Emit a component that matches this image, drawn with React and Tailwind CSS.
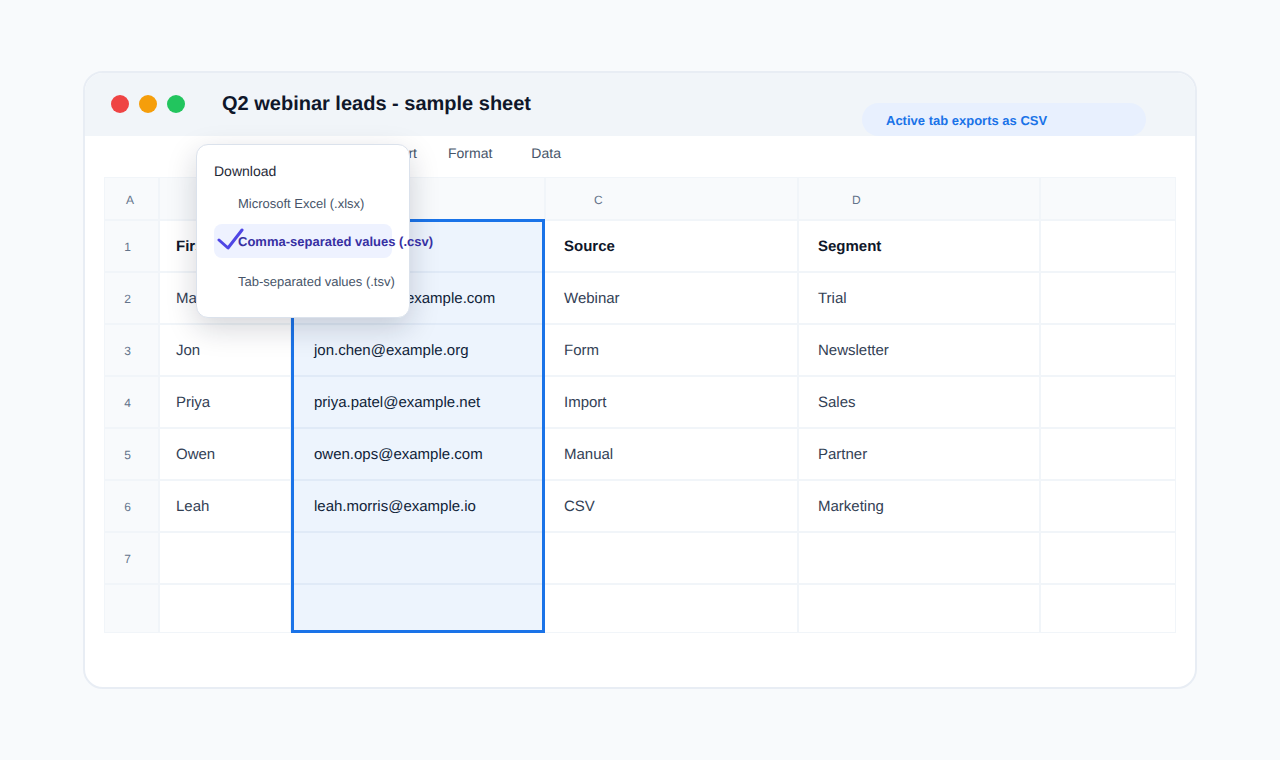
import React from "react";

const rows = [
  ["1", "First name", "Email", "Source", "Segment"],
  ["2", "Maya", "maya.lopez@example.com", "Webinar", "Trial"],
  ["3", "Jon", "jon.chen@example.org", "Form", "Newsletter"],
  ["4", "Priya", "priya.patel@example.net", "Import", "Sales"],
  ["5", "Owen", "owen.ops@example.com", "Manual", "Partner"],
  ["6", "Leah", "leah.morris@example.io", "CSV", "Marketing"],
  ["7", "", "", "", ""],
  ["", "", "", "", ""],
];

function HeadCell({ children, className = "" }) {
  return (
    <div className={`flex h-[43px] items-center border-b-2 border-[#f1f5f9] bg-[#f8fafc] pt-[2px] text-xs text-[#64748b] ${className}`}>
      {children}
    </div>
  );
}

function Row({ cells, last }) {
  const bold = cells[0] === "1";
  const rowStyle = last ? "h-[48px] border-b" : "h-[52px] border-b-2";
  const text = bold ? "font-bold text-[#0f172a]" : "text-[#334155]";
  return (
    <>
      <div className={`${rowStyle} flex items-center justify-center border-r-2 border-[#f1f5f9] bg-[#f8fafc] pt-[2px] pr-2 text-xs text-[#64748b]`}>
        {cells[0]}
      </div>
      <div className={`${rowStyle} ${text} flex items-center border-r-2 border-[#f1f5f9] pt-[2px] pl-4 text-[15px]`}>{cells[1]}</div>
      <div className={`${rowStyle} ${bold ? text : "text-[#0f172a]"} flex items-center border-[#f1f5f9] pt-[2px] pl-[22px] text-[15px]`}>{cells[2]}</div>
      <div className={`${rowStyle} ${text} flex items-center border-r-2 border-[#f1f5f9] pt-[2px] pl-[18px] text-[15px]`}>{cells[3]}</div>
      <div className={`${rowStyle} ${text} flex items-center border-r-2 border-[#f1f5f9] pt-[2px] pl-[19px] text-[15px]`}>{cells[4]}</div>
      <div className={`${rowStyle} border-[#f1f5f9]`} />
    </>
  );
}

function DownloadMenu() {
  return (
    <div className="absolute top-[71px] left-[111px] z-20 h-[174px] w-[214px] rounded-xl border border-[#dbe2ec] bg-white shadow-[0_10px_30px_rgba(15,23,42,0.18)]">
      <div className="mt-[16px] ml-[17px] text-sm leading-5 text-[#1f2937]">Download</div>
      <div className="mt-[15px] ml-[41px] text-[13px] leading-4 text-[#475569]">Microsoft Excel (.xlsx)</div>
      <div className="relative mt-[12px] ml-[17px] flex h-[34px] w-[178px] items-center rounded-lg bg-[#eef2ff] pt-px pl-6 text-[13px] font-bold whitespace-nowrap text-[#3730a3]">
        <svg className="absolute top-[4px] left-[3px]" width="28" height="22" viewBox="0 0 28 22" fill="none">
          <path d="M2 12L11 20L25 2" stroke="#4f46e5" strokeWidth="3" strokeLinecap="round" strokeLinejoin="round" />
        </svg>
        Comma-separated values (.csv)
      </div>
      <div className="mt-[16px] ml-[41px] text-[13px] leading-4 text-[#475569]">Tab-separated values (.tsv)</div>
    </div>
  );
}

export default function App() {
  return (
    <div className="min-h-[760px] bg-[#f8fafc] px-[83px] pt-[71px] font-['Liberation_Sans',Arial,sans-serif] antialiased [text-rendering:geometricPrecision]">
      <div className="relative h-[618px] rounded-[20px] border-2 border-[#e8edf4] bg-white">
        <div className="flex h-[63px] rounded-t-[18px] bg-[#f1f5f9]">
          <div className="mt-[22px] ml-[26px] flex h-[18px] gap-[10px]">
            <span className="size-[18px] rounded-full bg-[#ef4444]" />
            <span className="size-[18px] rounded-full bg-[#f59e0b]" />
            <span className="size-[18px] rounded-full bg-[#22c55e]" />
          </div>
          <h1 className="mt-[18px] ml-[37px] text-xl leading-[26px] font-bold text-[#0f172a]">Q2 webinar leads - sample sheet</h1>
          <div className="mt-auto mr-[49px] ml-auto flex h-[33px] w-[284px] items-center rounded-full bg-[#e8f0fe] pt-[2px] pl-6 text-[13px] font-bold text-[#1a73e8]">
            Active tab exports as CSV
          </div>
        </div>

        <div className="flex h-[41px] items-start pt-[7px] pl-[297px] text-sm leading-5 text-[#475569]">
          <span>Insert</span>
          <span className="ml-[31px]">Format</span>
          <span className="ml-[39px]">Data</span>
        </div>

        <DownloadMenu />

        <div className="relative mx-[19px] grid grid-cols-[55px_132px_254px_253px_242px_134px] border-t border-r border-l border-[#f1f5f9]">
          <HeadCell className="justify-center border-r-2 pr-[3px]">A</HeadCell>
          <HeadCell className="border-r-2 pl-[50px]">B</HeadCell>
          <HeadCell className="border-r-2" />
          <HeadCell className="border-r-2 pl-[48px]">C</HeadCell>
          <HeadCell className="border-r-2 pl-[53px]">D</HeadCell>
          <HeadCell />
          {rows.map((cells, i) => (
            <Row key={i} cells={cells} last={i === rows.length - 1} />
          ))}
          <div className="absolute top-[41px] left-[186px] h-[414px] w-[254px] border-[3px] border-[#1a73e8] bg-[#1a73e8]/8" />
        </div>
      </div>
    </div>
  );
}
